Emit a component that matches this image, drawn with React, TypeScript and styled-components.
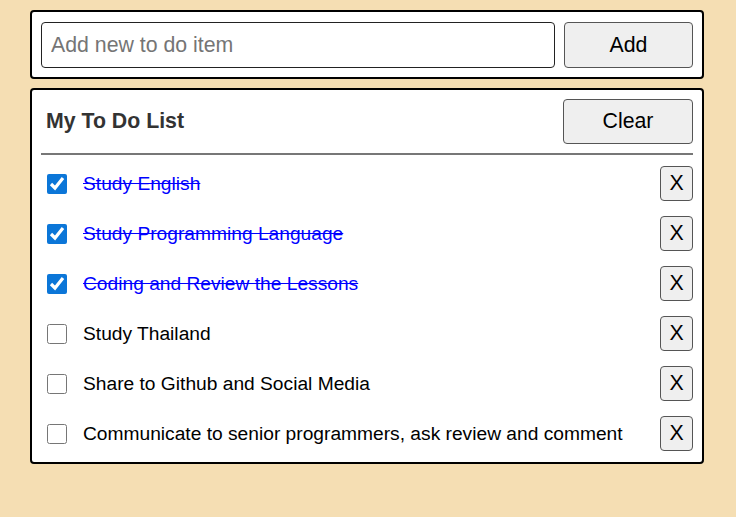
import React, { useState } from "react";
import styled, { createGlobalStyle } from "styled-components";

const GlobalStyle = createGlobalStyle`
  html, body {
    margin: 0;
    padding: 0;
    background: #f5deb3;
    font-family: "Liberation Sans", Arial, sans-serif;
  }
  * { box-sizing: border-box; }
`;

const Page = styled.div`
  min-height: 517px;
  padding: 10px 0 0 30px;
`;

const Column = styled.div`
  width: 674px;
  display: flex;
  flex-direction: column;
  gap: 9px;
`;

const Card = styled.div`
  background: #fff;
  border: 2px solid #000;
  border-radius: 4px;
`;

const AddForm = styled(Card)`
  display: flex;
  gap: 9px;
  padding: 10px 9px 9px 9px;
`;

const TextInput = styled.input`
  flex: 1;
  height: 46px;
  border: 1px solid #222;
  border-radius: 4px;
  padding: 0 9px;
  font-family: "Liberation Sans", Arial, sans-serif;
  font-size: 21.3px;
  color: #000;
  outline: none;
  &::placeholder { color: #757575; }
`;

const Button = styled.button<{ $w: number; $h: number }>`
  width: ${(p) => p.$w}px;
  height: ${(p) => p.$h}px;
  background: #efefef;
  border: 1px solid #555;
  border-radius: 4px;
  font-family: "Liberation Sans", Arial, sans-serif;
  font-size: 21.3px;
  color: #000;
  padding: 0;
  cursor: pointer;
  flex-shrink: 0;
`;

const ListCard = styled(Card)`
  padding: 9px 9px 11px 9px;
  display: flex;
  flex-direction: column;
`;

const Header = styled.div`
  display: flex;
  align-items: center;
  justify-content: space-between;
  padding-left: 5px;
`;

const Title = styled.h3`
  margin: 0;
  font-size: 21.3px;
  font-weight: bold;
  color: #333;
`;

const Divider = styled.hr`
  margin: 9px 0 11px 0;
  border: none;
  height: 2px;
  background: #777;
`;

const Items = styled.ul`
  list-style: none;
  margin: 0;
  padding: 0;
  display: flex;
  flex-direction: column;
  gap: 15px;
`;

const Item = styled.li`
  display: flex;
  align-items: center;
  height: 35px;
  padding-left: 6px;
`;

const Check = styled.input`
  width: 20px;
  height: 20px;
  margin: 0;
  flex-shrink: 0;
  accent-color: #0b76d8;
`;

const Label = styled.span<{ $done: boolean }>`
  flex: 1;
  margin-left: 16px;
  font-size: 19.2px;
  color: ${(p) => (p.$done ? "#0000ff" : "#000")};
  text-decoration: ${(p) => (p.$done ? "line-through" : "none")};
`;

const initial = [
  { text: "Study English", done: true },
  { text: "Study Programming Language", done: true },
  { text: "Coding and Review the Lessons", done: true },
  { text: "Study Thailand", done: false },
  { text: "Share to Github and Social Media", done: false },
  { text: "Communicate to senior programmers, ask review and comment", done: false },
];

export default function App() {
  const [items, setItems] = useState(initial);
  const [value, setValue] = useState("");

  const toggle = (i: number) =>
    setItems(items.map((it, j) => (j === i ? { ...it, done: !it.done } : it)));
  const remove = (i: number) => setItems(items.filter((_, j) => j !== i));
  const add = () => {
    if (!value.trim()) return;
    setItems([...items, { text: value.trim(), done: false }]);
    setValue("");
  };

  return (
    <>
      <GlobalStyle />
      <Page>
        <Column>
          <AddForm>
            <TextInput
              placeholder="Add new to do item"
              value={value}
              onChange={(e) => setValue(e.target.value)}
            />
            <Button $w={129} $h={46} onClick={add}>
              Add
            </Button>
          </AddForm>
          <ListCard>
            <Header>
              <Title>My To Do List</Title>
              <Button $w={130} $h={45} onClick={() => setItems([])}>
                Clear
              </Button>
            </Header>
            <Divider />
            <Items>
              {items.map((it, i) => (
                <Item key={i}>
                  <Check type="checkbox" checked={it.done} onChange={() => toggle(i)} />
                  <Label $done={it.done}>{it.text}</Label>
                  <Button $w={33} $h={35} onClick={() => remove(i)}>
                    X
                  </Button>
                </Item>
              ))}
            </Items>
          </ListCard>
        </Column>
      </Page>
    </>
  );
}
